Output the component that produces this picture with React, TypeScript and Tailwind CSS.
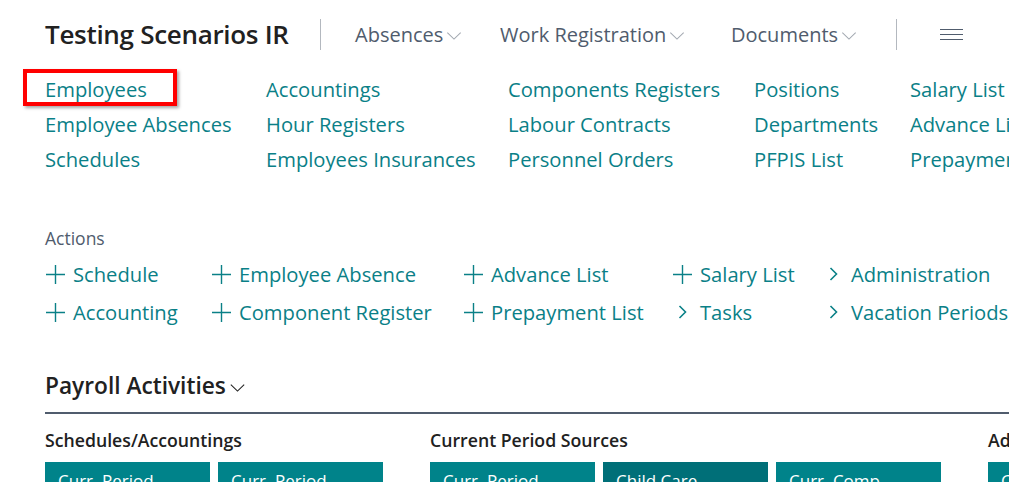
import React from "react";

const links = [
  ["Employees", "Accountings", "Components Registers", "Positions", "Salary List"],
  ["Employee Absences", "Hour Registers", "Labour Contracts", "Departments", "Advance List"],
  ["Schedules", "Employees Insurances", "Personnel Orders", "PFPIS List", "Prepayment List"],
];

type Action = { label: string; kind: "plus" | "chevron" };

const actions: Action[][] = [
  [
    { label: "Schedule", kind: "plus" },
    { label: "Employee Absence", kind: "plus" },
    { label: "Advance List", kind: "plus" },
    { label: "Salary List", kind: "plus" },
    { label: "Administration", kind: "chevron" },
  ],
  [
    { label: "Accounting", kind: "plus" },
    { label: "Component Register", kind: "plus" },
    { label: "Prepayment List", kind: "plus" },
    { label: "Tasks", kind: "chevron" },
    { label: "Vacation Periods", kind: "chevron" },
  ],
];

const groups = [
  {
    title: "Schedules/Accountings",
    tiles: [
      { label: "Curr. Period Schedules", dark: false },
      { label: "Curr. Period Accountings", dark: false },
    ],
  },
  {
    title: "Current Period Sources",
    tiles: [
      { label: "Curr. Period Absences", dark: false },
      { label: "Child Care Vacations", dark: true },
      { label: "Curr. Comp. Registers", dark: false },
    ],
  },
  {
    title: "Administration",
    tiles: [{ label: "Curr. Period Orders", dark: false }],
  },
];

function ChevronDown({ className }: { className?: string }) {
  return (
    <svg viewBox="0 0 16 9" className={className} fill="none" stroke="currentColor" strokeWidth="1.2">
      <path d="M0.5 0.8 L8 8 L15.5 0.8" />
    </svg>
  );
}

function PlusIcon() {
  return (
    <svg viewBox="0 0 21 21" className="w-[21px] h-[21px]" fill="none" stroke="currentColor" strokeWidth="1.4">
      <path d="M10.5 1 V20 M1 10.5 H20" />
    </svg>
  );
}

function ChevronRight() {
  return (
    <svg viewBox="0 0 9 14" className="ml-[6px] w-[9px] h-[14px]" fill="none" stroke="currentColor" strokeWidth="1.6">
      <path d="M1.5 1 L7.5 7 L1.5 13" />
    </svg>
  );
}

function NavItem({ label, width }: { label: string; width: string }) {
  return (
    <div className={`flex items-center ${width}`}>
      <span className="text-[20px] text-[#505c6d]">{label}</span>
      <ChevronDown className="ml-[3px] mt-[3px] w-[16px] h-[8px] text-[#a3a9b1]" />
    </div>
  );
}

export default function App() {
  return (
    <div className="w-[1009px] h-[482px] overflow-hidden bg-white font-['Open_Sans',sans-serif]">
      <div className="w-[1400px] pl-[45px]">
        {/* Header */}
        <div className="flex items-center h-[31px] mt-[19px] whitespace-nowrap">
          <h1 className="text-[26px] tracking-[-0.3px] font-semibold text-[#212121] w-[275px]">Testing Scenarios IR</h1>
          <div className="w-px h-[31px] bg-[#b3b8bf]" />
          <div className="flex items-center ml-[34px]">
            <NavItem label="Absences" width="w-[145px]" />
            <NavItem label="Work Registration" width="w-[231px]" />
            <NavItem label="Documents" width="w-[165px]" />
          </div>
          <div className="w-px h-[31px] bg-[#b3b8bf]" />
          <div className="ml-[43px] flex flex-col gap-[3.5px]">
            <div className="w-[23px] h-[1.5px] bg-[#505c6d]" />
            <div className="w-[23px] h-[1.5px] bg-[#505c6d]" />
            <div className="w-[23px] h-[1.5px] bg-[#505c6d]" />
          </div>
        </div>

        {/* Navigation links */}
        <div className="mt-[22px] grid grid-cols-[221px_242px_246px_156px_200px] text-[20.2px] leading-[35px] text-[#0a8087] whitespace-nowrap">
          {links.map((row, r) =>
            row.map((label, c) => (
              <div key={`${r}-${c}`} className="relative">
                {r === 0 && c === 0 && (
                  <div className="absolute left-[-22px] top-[-3px] w-[154px] h-[37px] border-[4px] border-[#ff0000] shadow-[2px_2px_3px_rgba(0,0,0,0.35)]" />
                )}
                {label}
              </div>
            ))
          )}
        </div>

        {/* Actions */}
        <div className="mt-[49px] text-[17.5px] leading-[24px] text-[#505c6d]">Actions</div>
        <div className="mt-[5px] grid grid-cols-[166px_252px_209px_151px_220px] text-[20.2px] leading-[38px] text-[#0a8087] whitespace-nowrap">
          {actions.map((row, r) =>
            row.map((a, c) => (
              <div key={`${r}-${c}`} className="flex items-center">
                <div className="w-[28px] flex items-center">
                  {a.kind === "plus" ? <PlusIcon /> : <ChevronRight />}
                </div>
                <span>{a.label}</span>
              </div>
            ))
          )}
        </div>

        {/* Payroll Activities */}
        <div className="mt-[40px] pb-[11px] border-b-2 border-[#505c6d] flex items-center">
          <h2 className="text-[22.7px] leading-[30px] font-semibold text-[#212121]">Payroll Activities</h2>
          <ChevronDown className="ml-[4px] mt-[4px] w-[15px] h-[8px] text-[#212121]" />
        </div>

        <div className="mt-[14px] flex gap-[47px]">
          {groups.map((g) => (
            <div key={g.title}>
              <div className="text-[17.7px] leading-[24px] font-semibold text-[#212121] whitespace-nowrap">{g.title}</div>
              <div className="mt-[10px] flex gap-[8px]">
                {g.tiles.map((t) => (
                  <div
                    key={t.label}
                    className={`w-[165px] h-[110px] pl-[13px] pr-[8px] pt-[7px] text-[17px] leading-[23px] text-white ${t.dark ? "bg-[#006f78]" : "bg-[#00838a]"}`}
                  >
                    {t.label}
                  </div>
                ))}
              </div>
            </div>
          ))}
        </div>
      </div>
    </div>
  );
}
